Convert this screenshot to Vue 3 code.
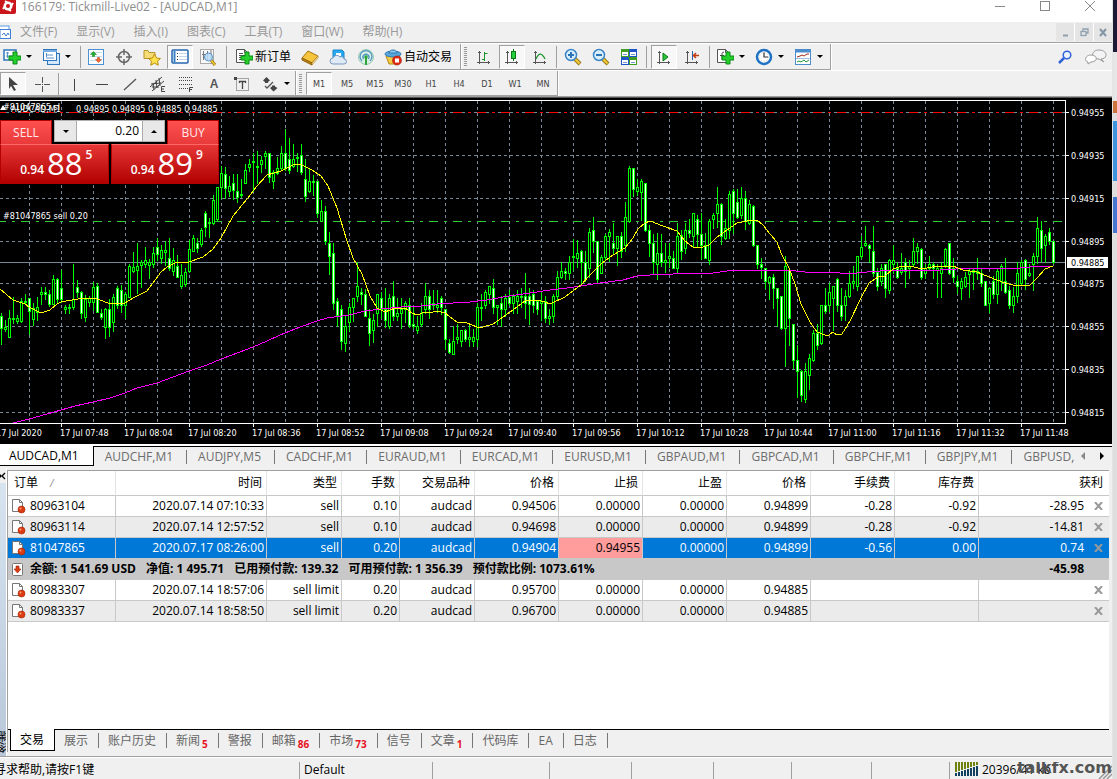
<script setup>
import { ref } from 'vue'

const lots = ref('0.20')

// Shared drawing fragments for toolbar glyphs (18 x 18 canvas)
const plus = '<path d="M11 5h4v4h4v4h-4v4h-4v-4H7V9h4z" transform="translate(-1 -1)" fill="#25cf2b" stroke="#0a8a16"/>'
const sheet = '<path d="M1.500 1.500h8l3 3v10h-11z" fill="#fff" stroke="#555"/><path d="M9.500 1.500v3h3" fill="none" stroke="#555"/>'
const axes = '<path d="M4.500 3v13M2 14.500h13M3 4.500h3M13.500 13v3" fill="none" stroke="#555"/>'
const handle = '<path d="M10 10l6 6" stroke="#9b7410" stroke-width="4"/><path d="M10.500 10.500l5 5" stroke="#f2cf3c" stroke-width="2"/>'

const icons = {
  newChart: '<rect x="1" y="2" width="12" height="10" fill="#fff" stroke="#2f76ba" stroke-width="1.500"/><path d="M3 5h3M4.500 4v6M3 8h7" stroke="#5b93c8"/>' + plus,
  profiles: '<rect x="5.500" y="5.500" width="12" height="11" fill="#d3e8fb" stroke="#2f76ba"/><rect x="1.500" y="1.500" width="13" height="11" fill="#fff" stroke="#2f76ba"/><path d="M1 3h14" stroke="#76aee2" stroke-width="2"/><path d="M4 7h7M4 10h8M4.500 5v4" stroke="#5b93c8"/>',
  market: '<rect x="1.500" y="1.500" width="15" height="15" fill="#fff" stroke="#4b91d4"/><path d="M3 4.500h12M3 8.500h12M3 12.500h12" stroke="#c5dcef"/><path d="M6.500 3.500l3 3H7.500v2h-2v-2h-2z" fill="#1fb02a" stroke="#0a7a16" stroke-width=".5"/><path d="M11.500 14.500l3-3h-2v-2h-2v2h-2z" fill="#f06a33" stroke="#b3340e" stroke-width=".5"/>',
  target: '<circle cx="9" cy="9" r="5.500" fill="none" stroke="#666" stroke-width="1.500"/><path d="M9 1v6M9 11v6M1 9h6M11 9h6" stroke="#666" stroke-width="1.500"/>',
  navigator: '<path d="M1 2.500h4l1 2h6v6H1z" fill="#f6dc76" stroke="#b89428"/><path d="M11.500 6l2 4 4 .5-3 2.700.8 4-3.800-2-3.800 2 .8-4-3-2.700 4-.5z" fill="#ffe24d" stroke="#b98b10"/>',
  terminal: '<rect x="1" y="2" width="16" height="13" rx="1" fill="#fff" stroke="#2467b0" stroke-width="1.500"/><path d="M3.500 3v11" stroke="#3b7ec5" stroke-width="2"/><path d="M6 5.500h1M6 8.500h1M6 11.500h1" stroke="#333"/><path d="M8 5.500h8M8 8.500h8M8 11.500h8" stroke="#c4d6ef"/>',
  tester: '<rect x="1.500" y="1.500" width="13" height="14" fill="#f8f8f8" stroke="#aaa"/><path d="M4.500 3v9M8.500 3v9M3 6.500h3M12 2v8" stroke="#777"/><path d="M12 12l4 5" stroke="#9b7410" stroke-width="3"/><path d="M12 12l4 5" stroke="#f2cf3c" stroke-width="1.500"/><circle cx="9.500" cy="9" r="4" fill="#b9ddf8" fill-opacity=".85" stroke="#5a93c8"/>',
  order: sheet + '<path d="M4 5.500h4M4 7.500h6M4 9.500h4M4 11.500h3" stroke="#555"/>' + plus,
  book: '<path d="M1 10l6-7 10 5-6 7z" fill="#f5c53d" stroke="#a8730f"/><path d="M1 10l10 5v2L1 12z" fill="#c18717" stroke="#8f610c"/><path d="M11 15l6-7v2l-6 7z" fill="#fff0b5" stroke="#a8730f" stroke-width=".6"/>',
  cloud: '<path d="M4 2h9l2 2v7H4z" fill="#28a8ef" stroke="#1684cb"/><path d="M7 5h5v3H7z" fill="#fff"/><path d="M4 16a3 3 0 0 1 0-6 4 4 0 0 1 7-1 3 3 0 0 1 4 2 2.500 2.500 0 0 1 0 5z" fill="#dfeaf7" stroke="#7d97bd"/>',
  signal: '<circle cx="9" cy="9" r="7.500" fill="#d9efe4" stroke="#9ccab4"/><path d="M5 13a6 6 0 1 1 8 0M6.500 11a3 3 0 1 1 5 0" fill="none" stroke="#4d94c2" stroke-width="1.300"/><circle cx="9" cy="9" r="1.800" fill="#2fa53b"/><path d="M9 9v8" stroke="#2fa53b" stroke-width="2"/>',
  auto: '<path d="M2 8l7-2 7 2-3 8H5z" fill="#f4cb45" stroke="#b58614"/><ellipse cx="9" cy="6" rx="8" ry="3" fill="#57a6dc" stroke="#2d78b2"/><path d="M5 5c0-4 8-4 8 0z" fill="#8cc9ef" stroke="#2d78b2"/><circle cx="13" cy="12.500" r="4.500" fill="#e02a18" stroke="#a91405" stroke-width=".6"/><rect x="11" y="10.500" width="4" height="4" fill="#fff"/>',
  bars: axes + '<path d="M9.500 4v9M9.500 5.500h3M7 11.500h3" stroke="#16922a" fill="none"/>',
  candles: axes + '<path d="M10.500 1v12" stroke="#0a7a16"/><rect x="8.500" y="3.500" width="4" height="7" fill="#25cf3b" stroke="#0a7a16"/>',
  line: axes + '<path d="M5 11c3-7 6-6 9 0" fill="none" stroke="#16922a" stroke-width="1.300"/>',
  zoomIn: handle + '<circle cx="7" cy="7" r="5.500" fill="#d9effc" stroke="#3c86c7" stroke-width="1.500"/><path d="M4 7h6M7 4v6" stroke="#2b74b8" stroke-width="2"/>',
  zoomOut: handle + '<circle cx="7" cy="7" r="5.500" fill="#d9effc" stroke="#3c86c7" stroke-width="1.500"/><path d="M4 7h6" stroke="#2b74b8" stroke-width="2"/>',
  tile: '<path d="M1 1h8v8H1zM9 9h8v8H9z" fill="#3f9d22"/><path d="M9 1h8v8H9zM1 9h8v8H1z" fill="#1f55c8"/><path d="M2 4h6v4H2zM10 4h6v4h-6zM2 12h6v4H2zM10 12h6v4h-6z" fill="#fff"/><path d="M3 6.500h4M11 6.500h4M3 14.500h4M11 14.500h4" stroke="#6b9bd8"/>',
  scroll: axes + '<path d="M8 5l5 4-5 4z" fill="#2cc63b" stroke="#0a7a16"/>',
  shift: axes + '<path d="M9.500 3v9" stroke="#2a5ea8"/><path d="M16 7.500h-5M13 5l-2.500 2.500L13 10" fill="none" stroke="#c33a12" stroke-width="1.500"/>',
  indicators: sheet + '<path d="M8 4.500c-2-1-2 1-2 3v4M4 7.500h4" fill="none" stroke="#444"/>' + plus,
  clock: '<circle cx="9" cy="9" r="7" fill="#fff" stroke="#1f71c4" stroke-width="2.500"/><circle cx="9" cy="9" r="4.500" fill="none" stroke="#bbb" stroke-dasharray="1 2"/><path d="M9 4.500V9h4" fill="none" stroke="#333" stroke-width="1.200"/>',
  template: '<rect x="1.500" y="1.500" width="15" height="15" fill="#fff" stroke="#4a8ccc"/><path d="M1 3h16" stroke="#4a8ccc" stroke-width="3"/><path d="M3 9l3-1 2-1 2 1 3-2 2 0" fill="none" stroke="#a3281c"/><path d="M3 14l2-1 2 1 3-2 2 2 3-2" fill="none" stroke="#209336"/><path d="M2 10.500h14" stroke="#9cc0e4"/>',
  arrow: '<path d="M5 2l9 8H9l3 5-2 1-3-5-2 3z" fill="#444"/>',
  cross: '<path d="M9.500 2v6M9.500 11v6M2 9.500h6M11 9.500h6M9 9.500h1" stroke="#555"/>',
  vline: '<path d="M9.500 4v12" stroke="#444"/>',
  hline: '<path d="M3 9.500h12" stroke="#444"/>',
  trend: '<path d="M3 15L15 4" stroke="#555" stroke-width="1.300"/>',
  channel: '<path d="M1 12L13 2M3 16L15 6M4 8l1 7M7 5l1 8M10 3l1 8M2 9l10-1M3 12h7" stroke="#444" fill="none"/><path d="M16 11.500h-3.500v5H16M12.500 14H15" stroke="#444" fill="none"/>',
  fibo: '<path d="M2 2.500h14M2 5.500h14M2 9.500h14M2 13.500h9" stroke="#444" stroke-dasharray="1 1"/><path d="M16 12.500h-3.500V17M12.500 14.500H15" stroke="#444" fill="none"/>',
  label: '<rect x="3.500" y="3.500" width="12" height="12" fill="none" stroke="#555" stroke-dasharray="1 1"/><path d="M1 2h3v3H1z" fill="#444"/><path d="M6 6.500h7M9.500 6v8M6.500 6v2M12.500 6v2" stroke="#444" stroke-width="1.300"/>',
  arrows: '<path d="M5.500 2L9 5.500 7 7v1H4V7L2 5.500zM12.500 16.500L9 13l2-1.500v-1h3v1l2.500 1.500z" fill="#444"/><path d="M4 11l2 2 6-6" stroke="#555" fill="none" stroke-width="1.300"/>',
}

const chartTools = [
  { id: 'newChart', name: '新图表', drop: true }, { id: 'profiles', name: '配置文件', drop: true }, { sep: 's4' },
  { id: 'market', name: '市场报价' }, { id: 'target', name: '数据窗口' }, { id: 'navigator', name: '导航' },
  { id: 'terminal', name: '终端', on: true }, { id: 'tester', name: '策略测试' }, { sep: 's9' },
  { id: 'order', name: '新订单', text: '新订单' }, { id: 'book', name: 'MetaEditor' }, { id: 'cloud', name: '云' },
  { id: 'signal', name: '信号' }, { id: 'auto', name: '自动交易', text: '自动交易' },
]
const viewTools = [
  { id: 'bars', name: '柱状图' }, { id: 'candles', name: '阴阳烛', on: true }, { id: 'line', name: '折线图' }, { sep: 's5' },
  { id: 'zoomIn', name: '放大' }, { id: 'zoomOut', name: '缩小' }, { id: 'tile', name: '平铺窗口' }, { sep: 's7' },
  { id: 'scroll', name: '自动滚动', on: true }, { id: 'shift', name: '图表平移' }, { sep: 's7' },
  { id: 'indicators', name: '指标', drop: true }, { id: 'clock', name: '时间周期', drop: true }, { id: 'template', name: '模板', drop: true },
]
const drawTools = [
  { id: 'arrow', name: '光标', on: true }, { id: 'cross', name: '十字线' }, { sep: 's4' },
  { id: 'vline', name: '垂直线' }, { id: 'hline', name: '水平线' }, { id: 'trend', name: '趋势线' }, { id: 'channel', name: '通道' },
  { id: 'fibo', name: '斐波纳契' }, { letter: 'A', name: '文字' }, { id: 'label', name: '文字标签' }, { id: 'arrows', name: '箭头', drop: true },
]
const periods = ['M1', 'M5', 'M15', 'M30', 'H1', 'H4', 'D1', 'W1', 'MN']
const menus = ['文件(F)', '显示(V)', '插入(I)', '图表(C)', '工具(T)', '窗口(W)', '帮助(H)']

// high, body top, body bottom, low, falling
const raw = `
313,316,328,344,1 320,327,329,331,0 310,318,337,337,0 297,318,319,323,0 315,318,321,323,0 298,301,321,322,0 294,301,302,303,0 298,298,311,334,1
303,308,319,325,0 297,307,312,320,0 287,292,294,304,0 287,292,294,299,1 290,294,304,306,1 275,279,304,304,0 278,279,299,302,1 270,288,299,302,1
305,307,309,313,0 304,307,308,313,0 264,299,307,309,0 280,287,292,297,1 291,292,313,318,1 295,299,317,321,0 296,298,302,306,0 282,287,302,310,0
283,286,312,312,1 309,313,317,319,1 308,309,327,338,0 299,309,327,336,1 294,297,322,331,0 286,288,305,308,1 285,290,305,312,1 292,294,305,318,0
264,266,297,297,0 252,267,271,272,0 243,266,270,293,0 260,262,265,287,0 247,260,264,267,0 259,262,265,278,0 247,253,264,267,0 238,247,254,260,1
245,250,258,263,0 241,250,252,265,0 238,258,268,270,1 248,260,271,275,0 255,266,277,277,1 264,275,286,288,0 268,272,284,286,0 240,249,271,272,0
235,238,251,251,0 238,243,248,252,1 228,230,244,246,0 211,213,227,236,1 218,222,223,237,0 195,200,223,224,0 187,187,219,220,0 166,173,187,198,0
167,174,188,198,1 176,186,191,196,0 174,183,190,199,1 174,191,197,202,1 179,194,195,197,0 164,170,183,183,0 159,164,167,171,0 153,161,162,191,0
151,166,167,183,0 156,160,164,172,0 151,153,156,168,0 153,153,177,182,1 170,172,181,188,0 157,168,173,174,0 146,153,168,169,0 129,153,168,170,1
138,159,170,173,1 144,159,166,167,0 153,157,158,171,0 144,155,172,174,1 159,179,196,201,1 168,181,191,192,0 175,181,182,195,0 181,181,213,217,1
200,211,221,221,0 206,211,241,244,1 232,243,256,274,1 243,253,303,309,1 298,301,315,326,1 305,309,341,349,1 316,326,343,351,0 303,307,322,331,0
298,298,307,321,0 262,286,296,301,0 288,292,294,304,1 289,294,316,316,1 309,318,333,345,1 314,320,330,342,0 294,294,313,326,0 292,298,309,318,1
288,309,320,327,1 294,298,326,328,0 281,296,316,320,1 298,313,316,320,0 298,309,313,328,0 301,303,309,322,0 298,305,325,327,1 306,324,326,328,1
316,326,330,333,0 303,313,324,326,0 283,296,309,313,0 290,296,309,318,1 290,303,305,309,0 290,305,307,312,0 296,298,307,314,1 309,309,339,349,1
339,343,352,353,1 326,341,354,354,0 324,337,339,343,0 330,330,341,346,0 329,330,339,341,1 325,337,339,346,0 329,337,341,346,0 303,307,339,346,0
294,307,308,320,0 290,292,305,308,0 286,286,294,303,0 279,288,307,313,1 305,305,307,324,0 296,303,309,326,1 294,298,309,316,0 290,297,303,305,1
294,296,303,313,0 290,296,301,313,0 288,296,297,307,0 273,296,303,318,1 288,296,304,324,1 290,294,305,312,1 300,301,309,314,1 291,301,303,320,0
296,301,318,322,1 309,316,318,324,0 294,296,316,322,0 271,277,296,300,0 262,271,277,278,0 268,271,273,279,1 256,262,273,279,0 239,256,257,270,0
240,253,258,267,0 250,251,262,283,1 251,262,279,281,1 228,232,268,277,0 217,230,241,252,1 241,241,279,283,1 255,257,273,273,0 234,236,257,259,0
229,232,236,261,0 223,243,248,254,1 236,236,248,265,0 232,236,251,257,1 202,217,245,251,0 166,168,221,222,0 168,168,189,196,1 179,187,191,195,0
179,181,192,220,0 183,183,230,231,1 225,230,243,256,1 234,243,262,274,1 233,253,264,279,0 234,253,262,266,1 243,260,262,272,0 243,256,258,267,0
251,258,268,268,1 223,236,268,272,0 230,235,251,259,1 223,230,248,253,0 219,230,233,237,1 213,213,236,246,0 215,219,234,246,1 213,234,245,259,1
233,245,258,258,1 219,221,260,264,0 213,215,219,228,0 187,204,213,227,0 203,204,236,244,1 219,228,238,239,0 191,194,230,238,0 189,191,213,233,1
189,202,217,218,1 187,198,215,218,0 191,198,221,229,1 200,204,223,224,0 205,206,245,246,1 245,245,264,268,1 258,264,267,278,1 268,268,281,288,1
276,277,282,299,0 274,277,288,308,1 288,288,298,326,1 296,296,328,329,1 256,266,328,366,0 269,270,318,345,1 324,324,360,368,1 345,360,371,397,1
370,371,395,401,1 363,371,399,402,0 354,358,375,389,0 330,333,360,361,0 324,333,345,349,1 305,305,343,344,0 288,305,311,313,1 283,292,305,311,0
286,286,298,330,0 278,279,305,311,1 288,305,316,320,1 290,296,305,320,0 271,283,296,297,0 266,281,283,288,0 256,256,286,290,0 236,247,256,258,0
226,243,245,246,0 244,245,248,262,1 226,251,273,276,1 268,272,286,290,1 264,268,281,285,0 264,264,288,297,1 259,260,290,293,0 245,260,264,273,0
262,268,277,278,1 253,268,272,274,0 258,262,271,287,1 260,266,268,278,0 238,251,264,265,0 243,247,251,263,0 248,249,277,279,1 264,268,273,278,0
256,264,268,269,0 262,264,268,278,1 264,268,270,297,0 262,268,273,297,0 248,249,265,267,0 243,243,273,274,1 258,268,277,282,1 276,281,286,293,1
278,281,288,299,0 272,277,286,287,0 269,271,274,297,0 268,270,272,289,0 258,271,273,279,0 269,273,283,286,1 281,281,305,305,1 287,288,303,312,0
276,281,294,298,1 268,271,294,303,0 264,266,281,290,0 258,281,292,293,1 286,290,305,308,1 287,296,305,312,0 262,273,296,302,0 260,262,283,285,0
259,260,279,289,1 264,273,275,276,0 253,256,264,290,0 217,228,256,263,0 221,230,248,261,1 234,236,245,262,0 228,232,241,244,1 241,241,262,263,1`
const candles = raw.trim().split(/\s+/).map((s) => s.split(',').map(Number))

const wicks = candles.map(([h, , , l], i) => `M${i * 4 + 1.5} ${h}V${l + 1}`).join('')
const bodies = (falling) => candles
  .map(([, t, b, , f], i) => (f === falling ? `M${i * 4 + 0.5} ${t + 0.5}h2V${b + 0.5}h-2z` : ''))
  .join('')
const rising = bodies(0)
const fallingBodies = bodies(1)

const slow = '13,423 17,422 29,419 47,414 61,410 75,406 93,402 110,398 125,393 137,388 157,383 173,377 189,371 207,365 221,359 240,352 253,347 267,341 280,335 285,333 300,327 317,321 327,318 349,315 365,311 381,309 401,307 421,306 437,304 470,302 487,300 509,296 530,293 550,290 567,288 581,286 593,284 623,280 637,276 650,275 673,274 697,273 713,273 727,271 740,270 787,270 805,272 828,272 840,273 857,273 867,272 893,270 940,270 973,268 1020,268 1030,267 1053,266'
const fast = '0,289 13,300 25,304 29,307 41,313 50,310 57,304 61,302 72,300 85,298 97,299 103,301 110,304 125,303 133,298 147,291 153,283 161,272 167,267 177,262 189,262 203,257 213,249 221,238 233,216 247,199 257,186 267,175 281,171 293,165 300,164 312,170 321,176 328,186 337,208 347,241 353,258 362,274 370,296 377,308 385,312 395,308 405,308 412,313 417,315 425,312 429,313 437,311 445,313 457,322 467,323 477,327 483,327 493,324 503,317 517,307 525,301 537,300 545,302 550,304 565,297 581,285 589,276 601,264 613,255 625,248 633,238 638,229 645,223 650,221 663,226 677,231 685,241 693,247 703,247 709,245 717,237 727,230 737,223 747,221 757,220 763,225 770,234 777,242 781,253 789,268 795,284 801,304 810,322 817,332 825,335 829,335 833,332 837,335 842,334 850,321 861,298 869,283 878,277 885,276 893,269 902,266 910,266 922,269 937,266 953,266 963,270 977,272 989,277 1005,283 1013,285 1030,285 1037,278 1045,269 1053,266'

const gridX = Array.from({ length: 33 }, (_, i) => 29 + i * 32)
const prices = [[112, '0.94955'], [155, '0.94935'], [198, '0.94915'], [241, '0.94895'], [283, '0.94875'], [326, '0.94855'], [369, '0.94835'], [412, '0.94815']]
const times = ['2020', '07:48', '08:04', '08:20', '08:36', '08:52', '09:08', '09:24', '09:40', '09:56', '10:12', '10:28', '10:44', '11:00', '11:16', '11:32', '11:48']

const charts = ['AUDCAD,M1', 'AUDCHF,M1', 'AUDJPY,M5', 'CADCHF,M1', 'EURAUD,M1', 'EURCAD,M1', 'EURUSD,M1', 'GBPAUD,M1', 'GBPCAD,M1', 'GBPCHF,M1', 'GBPJPY,M1', 'GBPUSD,']
const heads = ['订单', '时间', '类型', '手数', '交易品种', '价格', '止损', '止盈', '价格', '手续费', '库存费', '获利']
const open = [
  ['80963104', '2020.07.14 07:10:33', 'sell', '0.10', 'audcad', '0.94506', '0.00000', '0.00000', '0.94899', '-0.28', '-0.92', '-28.95'],
  ['80963114', '2020.07.14 12:57:52', 'sell', '0.10', 'audcad', '0.94698', '0.00000', '0.00000', '0.94899', '-0.28', '-0.92', '-14.81'],
  ['81047865', '2020.07.17 08:26:00', 'sell', '0.20', 'audcad', '0.94904', '0.94955', '0.00000', '0.94899', '-0.56', '0.00', '0.74'],
]
const pending = [
  ['80983307', '2020.07.14 18:57:06', 'sell limit', '0.20', 'audcad', '0.95700', '0.00000', '0.00000', '0.94885'],
  ['80983337', '2020.07.14 18:58:50', 'sell limit', '0.20', 'audcad', '0.96700', '0.00000', '0.00000', '0.94885'],
]
const panels = [['交易'], ['展示'], ['账户历史'], ['新闻', 5], ['警报'], ['邮箱', 86], ['市场', 73], ['信号'], ['文章', 1], ['代码库'], ['EA'], ['日志']]
</script>

<template>
  <div class="desk">
    <div class="window">
      <header class="title">
        <svg class="logo" width="16" height="16" viewBox="0 0 16 16" aria-hidden="true">
          <rect x="-1" y="-2" width="17" height="16" rx="2" fill="#c9151b" />
          <circle cx="8" cy="6" r="4.500" fill="#fff" />
          <path d="M5 1l3 2M11 11l-3-2M3 9l2-3M13 3l-2 3" stroke="#fff" stroke-width="2" />
          <circle cx="8" cy="6" r="2" fill="#c9151b" />
        </svg>
        <h1>166179: Tickmill-Live02 - [AUDCAD,M1]</h1>
        <div class="sys">
          <button aria-label="最小化"><svg width="12" height="12"><path d="M1 6.500h10" stroke="#888" /></svg></button>
          <button aria-label="最大化"><svg width="12" height="12"><rect x="1.500" y="1.500" width="9" height="9" fill="none" stroke="#888" /></svg></button>
          <button aria-label="关闭"><svg width="12" height="12"><path d="M1 1l10 10M11 1L1 11" stroke="#888" /></svg></button>
        </div>
      </header>

      <nav class="menu">
        <svg width="12" height="15" viewBox="0 0 12 15" aria-hidden="true">
          <rect x="-3" y="1" width="12" height="9" fill="#fff" stroke="#5b9be0" />
          <rect x="0" y="4.500" width="10.500" height="9" fill="#fff" stroke="#3b82d6" />
          <path d="M2 10l2-2 2 3 2-3 1 2" fill="none" stroke="#3b82d6" />
        </svg>
        <button v-for="m in menus" :key="m">{{ m }}</button>
        <div class="mdi">
          <button aria-label="最小化图表"><svg width="9" height="9"><path d="M2 7.500h5" stroke="#8fa0b0" stroke-width="2" /></svg></button>
          <button aria-label="还原图表"><svg width="9" height="9"><path d="M3 3V1h5v4H6" fill="none" stroke="#8fa0b0" stroke-width="1.300" /><rect x="1" y="3.500" width="5" height="4" fill="none" stroke="#8fa0b0" stroke-width="1.300" /></svg></button>
          <button aria-label="关闭图表"><svg width="9" height="9"><path d="M1 1l6 7M7 1L1 8" stroke="#8496a6" stroke-width="2" /></svg></button>
        </div>
      </nav>

      <div class="bars">
        <div class="bar">
          <div class="group">
            <template v-for="(t, i) in chartTools" :key="i">
              <i v-if="t.sep" class="sep" :class="t.sep"></i>
              <button v-else class="tool" :class="{ on: t.on, drop: t.drop, wide: t.text }" :aria-label="t.name">
                <svg width="18" height="18" viewBox="0 0 18 18" v-html="icons[t.id]"></svg>
                <span v-if="t.text">{{ t.text }}</span>
                <b v-if="t.drop" class="caret"></b>
              </button>
            </template>
          </div>
          <div class="group">
            <i class="grip"></i>
            <template v-for="(t, i) in viewTools" :key="i">
              <i v-if="t.sep" class="sep" :class="t.sep"></i>
              <button v-else class="tool" :class="{ on: t.on, drop: t.drop }" :aria-label="t.name">
                <svg width="18" height="18" viewBox="0 0 18 18" v-html="icons[t.id]"></svg>
                <b v-if="t.drop" class="caret"></b>
              </button>
            </template>
          </div>
          <div class="aside">
            <button aria-label="搜索"><svg width="14" height="14"><circle cx="9" cy="5" r="3.800" fill="#eaf2ff" stroke="#2f62d8" stroke-width="1.500" /><path d="M6 8l-5 5" stroke="#2f62d8" stroke-width="2.500" /></svg></button>
            <button aria-label="聊天"><svg width="22" height="16"><path d="M14 1c9 0 9 9 2 9l3 3-5-3C5 10 6 1 14 1z" fill="#f3f3f6" stroke="#999" /><path d="M6 6c7 0 7 7 0 7l-3 2 0-2C-1 12 0 6 6 6z" fill="#fff" stroke="#999" /></svg></button>
          </div>
        </div>
        <div class="bar second">
          <div class="group">
            <template v-for="(t, i) in drawTools" :key="i">
              <i v-if="t.sep" class="sep" :class="t.sep"></i>
              <button v-else class="tool" :class="{ on: t.on, drop: t.drop }" :aria-label="t.name">
                <span v-if="t.letter" class="letter">{{ t.letter }}</span>
                <svg v-else width="18" height="18" viewBox="0 0 18 18" v-html="icons[t.id]"></svg>
                <b v-if="t.drop" class="caret"></b>
              </button>
            </template>
          </div>
          <div class="group">
            <i class="grip"></i>
            <button v-for="p in periods" :key="p" class="tool period" :class="{ on: p === 'M1' }">{{ p }}</button>
          </div>
        </div>
      </div>

      <section class="chart">
        <svg class="plot" width="100%" height="346">
          <g transform="translate(0 -98)" shape-rendering="crispEdges">
            <path v-for="x in gridX" :key="x" :d="`M${x}.5 101V423`" class="grid" />
            <line v-for="p in prices" :key="p[0]" x1="0" x2="100%" :y1="p[0] + 0.5" :y2="p[0] + 0.5" class="grid" />
            <rect x="0" y="262" width="100%" height="1" class="bid" />
            <line x1="-3" x2="100%" y1="112.500" y2="112.500" class="stop" />
            <line x1="-3" x2="100%" y1="221.500" y2="221.500" class="entry" />
            <path :d="wicks" class="wick" />
            <path :d="rising" class="wick up" />
            <path :d="fallingBodies" class="wick down" />
            <polyline :points="slow" class="slow" />
            <polyline :points="fast" class="fast" />
            <line x1="0" x2="100%" y1="100.500" y2="100.500" class="frame" />
            <line x1="0" x2="100%" y1="423.500" y2="423.500" class="frame" />
          </g>
          <svg x="100%" y="0" overflow="visible">
            <g transform="translate(-46 -98)">
              <rect x="0" y="98" width="50" height="328" fill="#000" />
              <path d="M-0.500 100V424" class="frame" />
              <g v-for="p in prices" :key="p[1]">
                <path :d="`M0 ${p[0]}.5h3`" class="frame" />
                <text x="5" :y="p[0] + 4">{{ p[1] }}</text>
              </g>
              <rect x="1" y="257" width="41" height="11" fill="#fff" />
              <text x="5" y="266" class="now">0.94885</text>
            </g>
          </svg>
          <g transform="translate(0 -98)">
            <g v-for="(t, i) in times" :key="t">
              <path :d="`M${i * 64 - 2.5} 424v3`" class="frame" />
              <text :x="i * 64 - 4" y="436">17 Jul {{ t }}</text>
            </g>
            <text x="3" y="110">#81047865 sl</text>
            <path d="M0 110h6l-3-5z" fill="#fff" />
            <text x="11" y="112">AUDCAD,M1</text>
            <text x="76" y="112">0.94895 0.94895 0.94885 0.94885</text>
            <text x="3" y="219">#81047865 sell 0.20</text>
          </g>
        </svg>
        <div class="deal">
          <div class="top">
            <button class="side">SELL</button>
            <div class="vol">
              <button aria-label="减少手数"><b class="caret"></b></button>
              <input v-model="lots" aria-label="手数" />
              <button aria-label="增加手数"><b class="caret up"></b></button>
            </div>
            <button class="side">BUY</button>
          </div>
          <div class="quotes">
            <button aria-label="卖出 0.94885"><small>0.94</small><strong>88</strong><sup>5</sup></button>
            <button aria-label="买入 0.94899"><small>0.94</small><strong>89</strong><sup>9</sup></button>
          </div>
        </div>
      </section>

      <nav class="tabs">
        <button v-for="(c, i) in charts" :key="c" :class="{ active: i === 0 }"><span>{{ c }}</span></button>
        <div class="scroll">
          <button aria-label="向左"><svg width="5" height="8"><path d="M4 0v8L0 4z" fill="#888" /></svg></button>
          <button aria-label="向右"><svg width="5" height="8"><path d="M1 0v8l4-4z" fill="#000" /></svg></button>
        </div>
      </nav>

      <section class="terminal">
        <aside class="rail">
          <button aria-label="关闭终端"><svg width="6" height="10"><path d="M-3 1l4 4-4 4M5 2L2 5l3 3" fill="none" stroke="#000" stroke-width="1.300" /></svg></button>
          <div><span>终端</span></div>
        </aside>
        <div class="pane">
          <div class="list">
            <table>
              <colgroup>
                <col class="c108" /><col class="c151" /><col class="c75" /><col class="c58" /><col class="c75" />
                <col v-for="n in 6" :key="n" class="c84" /><col />
              </colgroup>
              <thead>
                <tr><th v-for="(h, i) in heads" :key="i">{{ h }}<em v-if="i === 0">/</em></th></tr>
              </thead>
              <tbody>
                <tr v-for="(r, k) in open" :key="r[0]" :class="{ alt: k === 1, sel: k === 2 }">
                  <td v-for="(v, i) in r" :key="i" :class="{ hit: v === '0.94955' }">
                    <svg v-if="i === 0" width="15" height="16" viewBox="0 0 15 16"><path d="M1.500 1.500h7l3 3v9h-10z" fill="#fff" stroke="#777" /><path d="M8.500 1.500v3h3" fill="none" stroke="#777" /><circle cx="10.500" cy="11.500" r="3.500" fill="#dc3c12" stroke="#9d2406" stroke-width=".6" /><circle cx="9.500" cy="10.500" r="1" fill="#ffa27e" /></svg>{{ v }}<button v-if="i === 11" class="x" aria-label="平仓"><svg width="9" height="8"><path d="M1 0l7 8M8 0L1 8" stroke="#999" stroke-width="2" /></svg></button>
                  </td>
                </tr>
                <tr class="sum">
                  <td colspan="11"><svg width="15" height="16" viewBox="0 0 15 16"><rect x="1.500" y="2.500" width="10" height="12" rx="1" fill="#fff" stroke="#777" /><path d="M5 5h3v3h2l-3.500 4L3 8h2z" fill="#dc3c12" stroke="#9d2406" stroke-width=".6" /></svg><span>余额: 1 541.69 USD</span><span>净值: 1 495.71</span><span>已用预付款: 139.32</span><span>可用预付款: 1 356.39</span><span>预付款比例: 1073.61%</span></td>
                  <td>-45.98</td>
                </tr>
                <tr v-for="(r, k) in pending" :key="r[0]" :class="{ alt: k === 1 }">
                  <td v-for="(v, i) in r" :key="i"><svg v-if="i === 0" width="15" height="16" viewBox="0 0 15 16"><path d="M1.500 1.500h7l3 3v9h-10z" fill="#fff" stroke="#777" /><path d="M8.500 1.500v3h3" fill="none" stroke="#777" /><circle cx="10.500" cy="11.500" r="3.500" fill="#dc3c12" stroke="#9d2406" stroke-width=".6" /><circle cx="9.500" cy="10.500" r="1" fill="#ffa27e" /></svg>{{ v }}</td>
                  <td colspan="2"></td>
                  <td><button class="x" aria-label="删除挂单"><svg width="9" height="8"><path d="M1 0l7 8M8 0L1 8" stroke="#999" stroke-width="2" /></svg></button></td>
                </tr>
              </tbody>
            </table>
          </div>
          <nav class="panels">
            <button v-for="(p, i) in panels" :key="p[0]" :class="{ active: i === 0 }"><span>{{ p[0] }}</span><sub v-if="p[1]">{{ p[1] }}</sub></button>
          </nav>
        </div>
      </section>

      <footer class="status">
        <div class="help"><span>寻求帮助,请按F1键</span></div>
        <div class="profile">Default</div>
        <div class="w117"></div><div class="w82"></div><div class="w82"></div><div class="w78"></div><div class="w80"></div><div class="w78"></div>
        <div class="net">
          <svg width="24" height="14" aria-hidden="true">
            <path d="M1 0h2v10H1zM4 0h2v9H4zM7 0h2v8H7zM10 0h2v7h-2zM13 0h2v6h-2zM16 0h2v5h-2zM19 0h2v4h-2zM22 0h2v3h-2z" fill="#6f8210" />
            <path d="M1 11h2v3H1zM4 10h2v4H4zM7 9h2v5H7zM10 8h2v6h-2zM13 7h2v7h-2zM16 6h2v8h-2zM19 5h2v9h-2zM22 4h2v10h-2z" fill="#12405f" />
          </svg>
          <span>20396/41 kb</span>
          <svg class="size" width="14" height="14" aria-hidden="true"><path d="M1 14L14 1M5 14l9-9M9 14l5-5" stroke="#999" stroke-width="1.500" /></svg>
          <strong class="mark">talkfx.com</strong>
        </div>
      </footer>
    </div>
    <div class="behind"><i class="navy"></i><i class="gap1"></i><i class="fire"></i><i class="gap2"></i><i class="sky"></i><i class="gap3"></i><i class="blue"></i></div>
  </div>
</template>

<style>
body { margin: 0; }
</style>

<style scoped>
.desk, .desk * { box-sizing: border-box; }
.desk { display: flex; min-height: 100vh; overflow: hidden; background: #dedede; font: 12px/16px "Open Sans", "Noto Sans CJK SC", sans-serif; color: #000; }
.window { flex: 1; min-width: 0; display: flex; flex-direction: column; background: #f0f0f0; border-right: 1px solid #e4e4e4; }
button { border: 0; padding: 0; margin: 0; background: none; font: inherit; color: inherit; }
svg { display: block; flex: none; }

.title { display: flex; height: 22px; background: #fff; color: #8e8e8e; }
.title h1 { margin: 0 0 0 5px; font: inherit; line-height: 14px; white-space: nowrap; }
.sys { margin-left: auto; display: flex; height: 12px; }
.sys button { width: 45px; display: grid; place-items: center; }

.menu { display: flex; align-items: center; height: 21px; color: #999; border-bottom: 1px solid #a0a0a0; }
.menu > svg { margin-right: 8px; }
.menu > button { margin-right: 19px; white-space: nowrap; }
.mdi { margin-left: auto; display: flex; gap: 1px; background: #fff; }
.mdi button { width: 18px; height: 18px; display: grid; place-items: center; background: #e5e5e5; }

.bars { border-bottom: 1px solid #a0a0a0; background: #f0f0f0; }
.bar { display: flex; height: 27px; border-top: 1px solid #fff; }
.bar.second { height: 26px; }
.second .group { padding-top: 1px; }
.group { display: flex; align-items: center; border-right: 1px solid #a0a0a0; border-bottom: 1px solid #a0a0a0; box-shadow: 1px 0 #fff; }
.tool { position: relative; width: 28px; height: 24px; display: flex; align-items: center; justify-content: center; white-space: nowrap; }
.tool.on { width: 26px; margin: 0 1px; border: 1px solid; border-color: #a0a0a0 #fff #fff #a0a0a0; background: #f8f8f8; }
.tool.on:first-child { margin: 0 2px 0 0; }
.second .tool { height: 23px; }
.tool.drop { width: 39px; justify-content: flex-start; padding-left: 3px; }
.second .tool.drop { padding-left: 5px; }
.tool.wide { width: auto; padding: 0 5px 0 4px; gap: 2px; }
.tool.wide:last-child { margin-right: 3px; }
.tool.drop .caret { margin-left: 5px; }
.caret { border: 3px solid transparent; border-top-color: #000; border-bottom: 0; width: 0; height: 0; }
.caret.up { border-top: 0; border-bottom: 3px solid #000; }
.sep { height: 22px; display: flex; justify-content: center; }
.sep::before { content: ""; width: 1px; background: #a0a0a0; }
.s4 { width: 4px; } .s5 { width: 5px; } .s7 { width: 7px; } .s9 { width: 9px; }
.grip { width: 3px; height: 20px; margin: 0 3px; background: repeating-linear-gradient(#999 0 1px, #f0f0f0 1px 2px); }
.period { font: 9px/12px "DejaVu Sans Condensed", "DejaVu Sans", sans-serif; color: #444; }
.letter { font: bold 12px/14px "Liberation Sans", sans-serif; color: #555; }
.aside { margin-left: auto; display: flex; align-items: center; gap: 13px; padding-right: 5px; }

.chart { position: relative; height: 347px; background: #000; border-top: 1px solid #555; }
.plot { overflow: hidden; }
.plot text { font: 9px "DejaVu Sans Condensed", "DejaVu Sans", sans-serif; fill: #fff; }
.plot text.now { fill: #000; }
.grid { stroke: #778899; stroke-dasharray: 3 3; }
.bid { fill: #778899; }
.stop { stroke: #ff0000; stroke-width: 1px; stroke-dasharray: 9 6 3 6; }
.entry { stroke: #32cd32; stroke-width: 1px; stroke-dasharray: 9 6 3 6; }
.wick { stroke: #00ff00; fill: none; }
.wick.up { fill: #000; }
.wick.down { fill: #fff; }
.slow { stroke: #ff00ff; fill: none; }
.fast { stroke: #ffff00; fill: none; }
.frame { stroke: #fff; }
.deal { position: absolute; left: 0; top: 22px; width: 219px; background: #000; color: #fff; }
.top { display: flex; justify-content: space-between; height: 24px; }
.side { width: 52px; height: 24px; border: 1px solid #b30000; border-bottom: 0; background: linear-gradient(#ff5050, #e83a3a); color: #ffe9e9; }
.vol { display: flex; width: 111px; height: 22px; border: 1px solid #b0b0b0; }
.vol button { width: 21px; background: #e8e8e8; display: grid; place-items: center; }
.vol input { flex: 1; min-width: 0; border: 0; border-left: 1px solid #aaa; border-right: 1px solid #aaa; padding: 0 3px; margin: 0; text-align: right; font: inherit; background: #fff; color: #000; }
.quotes { display: flex; gap: 2px; }
.quotes button { flex: 1; height: 40px; display: flex; align-items: flex-end; justify-content: center; padding: 0 0 4px 4px; gap: 3px; border: 1px solid #b30000; border-top: 1px solid #f66; background: linear-gradient(#e63636, #b00000); }
.quotes small { font-size: 12px; font-weight: 600; line-height: 18px; }
.quotes strong { font-size: 31px; font-weight: 400; line-height: 32px; }
.quotes sup { align-self: flex-start; font-size: 12px; font-weight: 600; line-height: 20px; }

.tabs { display: flex; height: 24px; padding-top: 2px; color: #6d6d6d; background: linear-gradient(#fff 0 2px, #000 2px 3px, #f0f0f0 3px); overflow: hidden; }
.tabs > button { flex: none; height: 21px; display: flex; align-items: center; }
.tabs > button span { padding: 0 13px 0 11px; line-height: 14px; border-right: 1px solid #777; }
.tabs > button.active { height: 20px; color: #000; background: #fff; border: 1px solid #000; border-width: 0 1px 1px 0; }
.tabs > button.active span { border: 0; padding: 0 14px 0 9px; }
.tabs > button:nth-last-child(2) span { border: 0; padding-right: 0; }
.scroll { margin-left: auto; display: flex; gap: 13px; padding: 0 8px 2px 0; }

.terminal { flex: 1; display: flex; min-height: 285px; }
.rail { width: 7px; display: flex; flex-direction: column; border-right: 1px solid #fff; overflow: hidden; }
.rail button { height: 15px; }
.rail div { flex: 1; display: flex; align-items: flex-end; background: linear-gradient(#d8e3f0, #b8c8da); }
.rail span { writing-mode: vertical-rl; font: 11px/8px "Noto Sans CJK SC", sans-serif; transform: rotate(180deg); margin-bottom: 3px; }
.pane { flex: 1; min-width: 0; display: flex; flex-direction: column; margin: 2px 3px 4px 0; border: 1px solid #a0a0a0; border-width: 1px 0 0 1px; }
.list { flex: 1; background: #fff; }
table { width: 100%; border-collapse: separate; border-spacing: 0; table-layout: fixed; }
.c108 { width: 108px; } .c151 { width: 151px; } .c75 { width: 75px; } .c58 { width: 58px; } .c84 { width: 84px; }
th, td { padding: 0 2px 0 0; text-align: right; font-weight: 400; white-space: nowrap; border-bottom: 1px solid #c8c8c8; border-right: 1px solid #c8c8c8; overflow: hidden; }
th { height: 25px; padding-right: 4px; border-right-color: #e3e3e3; }
td { height: 21px; line-height: 16px; }
th:first-child { text-align: left; padding-left: 6px; }
th:last-child { padding-right: 6px; }
th em { margin-left: 12px; font-size: 10px; color: #888; }
td:first-child { text-align: left; padding-left: 3px; }
td:first-child svg { display: inline-block; vertical-align: top; margin-right: 4px; }
th:last-child, td:last-child { border-right: 0; }
td:last-child { padding-right: 6px; }
.x { width: 19px; padding-left: 10px; display: inline-block; vertical-align: 0; }
.alt td { background: #ebebeb; }
.sel td { background: #0078d7; color: #fff; }
.sel td.hit { background: #ff9c9c; color: #000; }
.sum td { background: #c8c8c8; border-right: 0; font-weight: 700; }
.sum td:last-child { padding-right: 25px; }
.sum span { margin-right: 10px; }

.panels { display: flex; height: 23px; padding-left: 2px; color: #666; background: linear-gradient(#000 0 1px, #f0f0f0 1px); }
.panels button { display: flex; align-items: center; height: 22px; white-space: nowrap; }
.panels button::after { content: ""; width: 1px; height: 15px; background: #777; margin-left: 10px; }
.panels span { margin-left: 9px; line-height: 15px; }
.panels sub { align-self: flex-end; margin: 0 0 0 2px; font: bold 10px/13px "Open Sans", sans-serif; color: #e81123; }
.panels .active { color: #000; background: #fff; border: solid #000; border-width: 0 1px 1px 1px; padding: 0 10px 0 0; }
.panels .active::after { display: none; }

.status { display: flex; height: 23px; border-top: 1px solid #a0a0a0; box-shadow: inset 0 1px #fff; }
.status > div { margin-top: 5px; line-height: 16px; border-right: 1px solid #a0a0a0; white-space: nowrap; }
.status .help { width: 300px; overflow: hidden; }
.help span { margin-left: -6px; }
.status .profile { flex: 1; padding-left: 4px; }
.w117 { width: 117px; } .w82 { width: 82px; } .w80 { width: 80px; } .w78 { width: 78px; }
.status .net { position: relative; width: 162px; border: 0; padding-left: 4px; display: flex; gap: 4px; overflow: hidden; }
.size { position: absolute; right: 0; bottom: 0; }
.mark { position: absolute; right: 0; top: -2px; font: bold 16px/16px "DejaVu Sans", sans-serif; color: #555; }

.behind { width: 4px; display: flex; flex-direction: column; }
.navy { height: 52px; background: #1b1b38; }
.gap1 { height: 49px; background: #e6e6e6; }
.fire { height: 12px; background: #c8743c; }
.gap2 { height: 8px; background: #ddd; }
.sky { height: 60px; background: #3d95dd; }
.gap3 { height: 16px; background: #ddd; }
.blue { height: 36px; background: #4676cf; }
</style>
